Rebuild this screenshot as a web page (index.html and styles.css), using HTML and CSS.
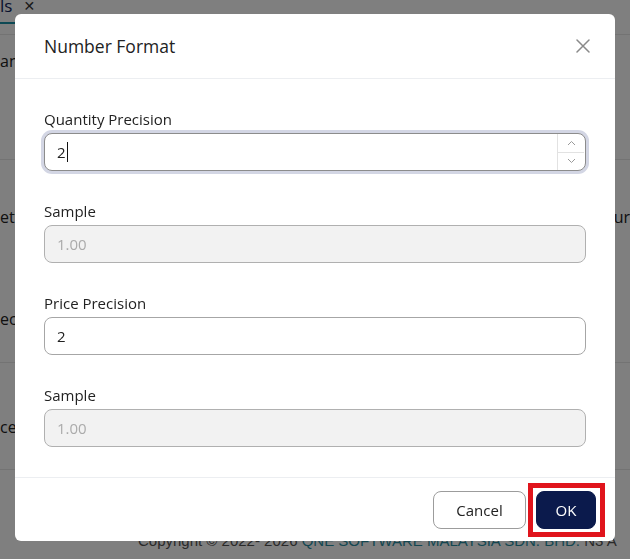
FILE: index.html
```html
<!DOCTYPE html>
<html lang="en">
<head>
<meta charset="utf-8">
<title>Number Format</title>
<link rel="stylesheet" href="styles.css">
</head>
<body>
<div class="page">
  <div class="tabbar">
    <div class="tab"><span class="tab-label">ls</span><span class="tab-x">✕</span></div>
  </div>
  <div class="content">
    <div class="row row-a">
      <span class="lt">and</span>
    </div>
    <div class="row row-b">
      <div class="line-pair">
        <span class="lt">ett</span>
        <span class="rt">ur</span>
      </div>
      <div class="line-pair">
        <span class="lt">ec</span>
      </div>
    </div>
    <div class="row row-c">
      <span class="lt">ce</span>
    </div>
  </div>
  <div class="copyright">Copyright © 2022- 2026 <span class="company">QNE SOFTWARE MALAYSIA SDN. BHD.</span> N3 A</div>
</div>

<div class="overlay"></div>

<div class="modal">
  <div class="modal-header">
    <h5 class="modal-title">Number Format</h5>
    <button class="close-btn" aria-label="Close">
      <svg width="14" height="14" viewBox="0 0 14 14"><path d="M1 1 L13 13 M13 1 L1 13" stroke="#8a8a8a" stroke-width="1.5" fill="none" stroke-linecap="round"/></svg>
    </button>
  </div>
  <div class="modal-body">
    <div class="field">
      <label class="label">Quantity Precision</label>
      <div class="control focused">
        <span class="value">2</span><span class="caret"></span>
        <span class="spacer"></span>
        <span class="spinner">
          <span class="spin-btn"><svg width="9" height="6" viewBox="0 0 9 6"><path d="M1 5 L4.5 1.5 L8 5" stroke="#9a9a9a" stroke-width="1" fill="none"/></svg></span>
          <span class="spin-btn spin-down"><svg width="9" height="6" viewBox="0 0 9 6"><path d="M1 1 L4.5 4.5 L8 1" stroke="#9a9a9a" stroke-width="1" fill="none"/></svg></span>
        </span>
      </div>
    </div>
    <div class="field">
      <label class="label">Sample</label>
      <div class="control disabled"><span class="value">1.00</span></div>
    </div>
    <div class="field">
      <label class="label">Price Precision</label>
      <div class="control"><span class="value">2</span></div>
    </div>
    <div class="field">
      <label class="label">Sample</label>
      <div class="control disabled"><span class="value">1.00</span></div>
    </div>
  </div>
  <div class="modal-footer">
    <button class="btn btn-cancel">Cancel</button>
    <button class="btn btn-ok">OK</button>
  </div>
</div>
</body>
</html>
```
FILE: styles.css
```css
html, body {
  margin: 0;
  padding: 0;
}
body {
  width: 630px;
  height: 559px;
  overflow: hidden;
  background: #ffffff;
  font-family: "Open Sans", "DejaVu Sans", sans-serif;
  color: #222;
}

/* background page */
.page {
  display: flex;
  flex-direction: column;
  height: 559px;
}
.tabbar {
  height: 34px;
  border-bottom: 1px solid #e6e6e6;
  display: flex;
}
.tab {
  margin-top: -11px;
  height: 35px;
  box-sizing: border-box;
  border-bottom: 2px solid #1a93a8;
  display: flex;
  align-items: center;
  gap: 11px;
  padding-right: 20px;
  font-size: 17px;
  color: #0d1e5c;
}
.tab-x {
  font-size: 14px;
  color: #333;
}
.content {
  display: flex;
  flex-direction: column;
}
.row {
  border-bottom: 1px solid #e6e6e6;
  display: flex;
  flex-direction: column;
  font-size: 16px;
  color: #222;
}
.row-a {
  height: 125px;
  padding-top: 15px;
  box-sizing: border-box;
}
.row-b {
  height: 203px;
  padding-top: 46px;
  box-sizing: border-box;
  gap: 80px;
}
.row-c {
  height: 107px;
  padding-top: 53px;
  box-sizing: border-box;
}
.line-pair {
  display: flex;
  justify-content: space-between;
  line-height: 22px;
}
.lt {
  line-height: 22px;
  white-space: nowrap;
}
.rt {
  white-space: nowrap;
}
.copyright {
  margin-top: auto;
  padding: 0 0 8px 138px;
  font-family: "Liberation Sans", Arial, sans-serif;
  font-size: 15px;
  line-height: 20px;
  color: #555;
  white-space: nowrap;
}
.company {
  color: #2a8fa3;
}

/* overlay + modal */
.overlay {
  position: fixed;
  inset: 0;
  background: rgba(0, 0, 0, 0.5);
}
.modal {
  position: fixed;
  left: 15px;
  top: 14px;
  width: 600px;
  height: 527px;
  background: #fff;
  border-radius: 6px;
  display: flex;
  flex-direction: column;
}
.modal-header {
  height: 65px;
  box-sizing: border-box;
  border-bottom: 1px solid #eceef1;
  display: flex;
  align-items: center;
  justify-content: space-between;
  padding: 0 25px 0 29px;
}
.modal-title {
  margin: 0;
  font-size: 17.5px;
  font-weight: 500;
  color: #222;
}
.close-btn {
  border: 0;
  background: none;
  padding: 0;
  width: 14px;
  height: 14px;
  display: flex;
}
.modal-body {
  flex: 1;
  padding: 29px 29px;
  display: flex;
  flex-direction: column;
  gap: 29px;
}
.field {
  display: flex;
  flex-direction: column;
  gap: 3px;
}
.label {
  font-size: 15px;
  line-height: 22px;
  color: #222;
}
.control {
  height: 38px;
  box-sizing: border-box;
  border: 1px solid #a6a6a6;
  border-radius: 8px;
  display: flex;
  align-items: center;
  padding-left: 12px;
  font-size: 15px;
  color: #222;
  background: #fff;
}
.control.focused {
  border-color: #8c8c8c;
  box-shadow: 0 0 0 3px #d3d6e4;
  padding-right: 1px;
}
.control.disabled {
  background: #f2f2f2;
  color: #ababab;
  border-color: #b0b0b0;
}
.caret {
  width: 1px;
  height: 20px;
  background: #111;
  margin-left: 1px;
}
.spacer {
  flex: 1;
}
.spinner {
  width: 26px;
  height: 36px;
  border-left: 1px solid #e2e2e2;
  display: flex;
  flex-direction: column;
}
.spin-btn {
  flex: 1;
  display: flex;
  align-items: center;
  justify-content: center;
}
.spin-down {
  border-top: 1px solid #e2e2e2;
}
.modal-footer {
  height: 64px;
  box-sizing: border-box;
  border-top: 1px solid #eceef1;
  display: flex;
  align-items: center;
  justify-content: flex-end;
  gap: 10px;
  padding: 0 19px 0 0;
}
.btn {
  height: 38px;
  border-radius: 8px;
  font-family: "Open Sans", "DejaVu Sans", sans-serif;
  font-size: 15px;
  cursor: pointer;
}
.btn-cancel {
  width: 93px;
  background: #fff;
  border: 1px solid #9c9c9c;
  color: #222;
}
.btn-ok {
  width: 60px;
  background: #0b1a4c;
  border: 1px solid #0b1a4c;
  color: #fff;
  position: relative;
}
.btn-ok::after {
  content: "";
  position: absolute;
  left: -9px;
  right: -10px;
  top: -9px;
  bottom: -9px;
  border: 5px solid #e0141c;
}
```
